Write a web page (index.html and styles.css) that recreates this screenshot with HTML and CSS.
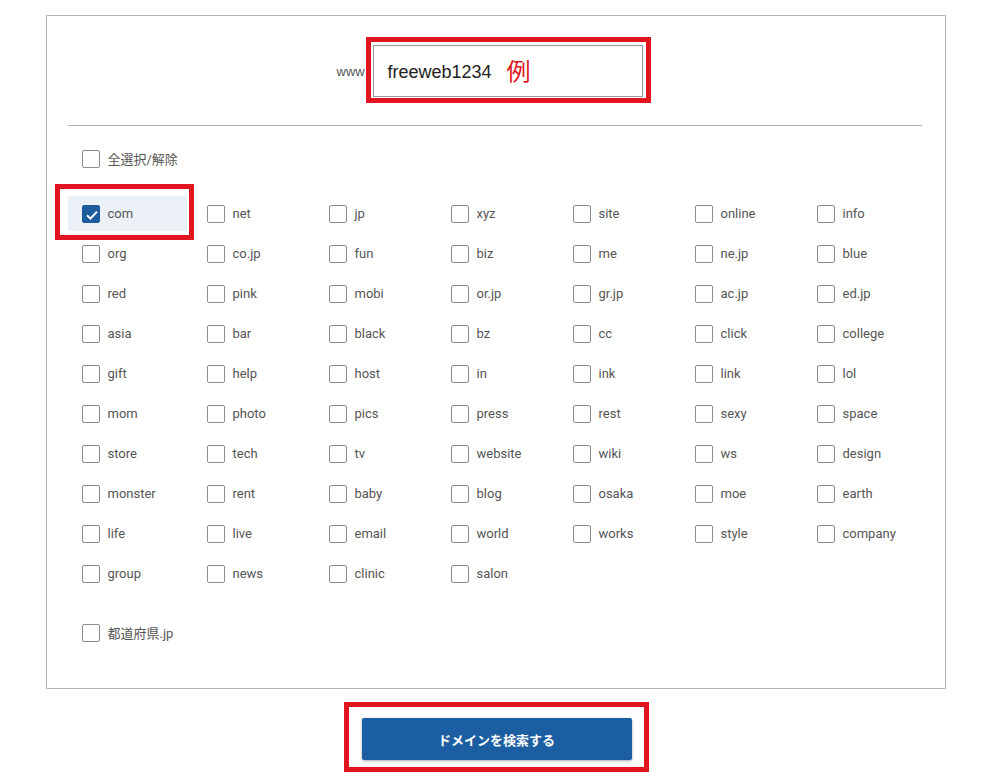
FILE: index.html
```html
<!DOCTYPE html>
<html lang="ja">
<head>
<meta charset="utf-8">
<title>ドメイン検索</title>
<link rel="stylesheet" href="styles.css">
</head>
<body>
<div class="card">
  <div class="domain-row">
    <span class="www">www</span>
    <div class="mark mark-input">
      <div class="input"><span class="val">freeweb1234</span><span class="rei">例</span></div>
    </div>
  </div>
  <hr class="divider">
  <div class="select-all">
    <label class="item"><span class="box"></span><span class="lbl">全選択/解除</span></label>
  </div>
  <div class="grid">
    <div class="mark mark-com"><label class="item checked"><span class="box"><svg viewBox="0 0 18 18" width="18" height="18"><path d="M4 9.3 L7.4 12.6 L14 5.6" fill="none" stroke="#fff" stroke-width="2"/></svg></span><span class="lbl">com</span></label></div>
    <label class="item"><span class="box"></span><span class="lbl">net</span></label>
    <label class="item"><span class="box"></span><span class="lbl">jp</span></label>
    <label class="item"><span class="box"></span><span class="lbl">xyz</span></label>
    <label class="item"><span class="box"></span><span class="lbl">site</span></label>
    <label class="item"><span class="box"></span><span class="lbl">online</span></label>
    <label class="item"><span class="box"></span><span class="lbl">info</span></label>

    <label class="item"><span class="box"></span><span class="lbl">org</span></label>
    <label class="item"><span class="box"></span><span class="lbl">co.jp</span></label>
    <label class="item"><span class="box"></span><span class="lbl">fun</span></label>
    <label class="item"><span class="box"></span><span class="lbl">biz</span></label>
    <label class="item"><span class="box"></span><span class="lbl">me</span></label>
    <label class="item"><span class="box"></span><span class="lbl">ne.jp</span></label>
    <label class="item"><span class="box"></span><span class="lbl">blue</span></label>

    <label class="item"><span class="box"></span><span class="lbl">red</span></label>
    <label class="item"><span class="box"></span><span class="lbl">pink</span></label>
    <label class="item"><span class="box"></span><span class="lbl">mobi</span></label>
    <label class="item"><span class="box"></span><span class="lbl">or.jp</span></label>
    <label class="item"><span class="box"></span><span class="lbl">gr.jp</span></label>
    <label class="item"><span class="box"></span><span class="lbl">ac.jp</span></label>
    <label class="item"><span class="box"></span><span class="lbl">ed.jp</span></label>

    <label class="item"><span class="box"></span><span class="lbl">asia</span></label>
    <label class="item"><span class="box"></span><span class="lbl">bar</span></label>
    <label class="item"><span class="box"></span><span class="lbl">black</span></label>
    <label class="item"><span class="box"></span><span class="lbl">bz</span></label>
    <label class="item"><span class="box"></span><span class="lbl">cc</span></label>
    <label class="item"><span class="box"></span><span class="lbl">click</span></label>
    <label class="item"><span class="box"></span><span class="lbl">college</span></label>

    <label class="item"><span class="box"></span><span class="lbl">gift</span></label>
    <label class="item"><span class="box"></span><span class="lbl">help</span></label>
    <label class="item"><span class="box"></span><span class="lbl">host</span></label>
    <label class="item"><span class="box"></span><span class="lbl">in</span></label>
    <label class="item"><span class="box"></span><span class="lbl">ink</span></label>
    <label class="item"><span class="box"></span><span class="lbl">link</span></label>
    <label class="item"><span class="box"></span><span class="lbl">lol</span></label>

    <label class="item"><span class="box"></span><span class="lbl">mom</span></label>
    <label class="item"><span class="box"></span><span class="lbl">photo</span></label>
    <label class="item"><span class="box"></span><span class="lbl">pics</span></label>
    <label class="item"><span class="box"></span><span class="lbl">press</span></label>
    <label class="item"><span class="box"></span><span class="lbl">rest</span></label>
    <label class="item"><span class="box"></span><span class="lbl">sexy</span></label>
    <label class="item"><span class="box"></span><span class="lbl">space</span></label>

    <label class="item"><span class="box"></span><span class="lbl">store</span></label>
    <label class="item"><span class="box"></span><span class="lbl">tech</span></label>
    <label class="item"><span class="box"></span><span class="lbl">tv</span></label>
    <label class="item"><span class="box"></span><span class="lbl">website</span></label>
    <label class="item"><span class="box"></span><span class="lbl">wiki</span></label>
    <label class="item"><span class="box"></span><span class="lbl">ws</span></label>
    <label class="item"><span class="box"></span><span class="lbl">design</span></label>

    <label class="item"><span class="box"></span><span class="lbl">monster</span></label>
    <label class="item"><span class="box"></span><span class="lbl">rent</span></label>
    <label class="item"><span class="box"></span><span class="lbl">baby</span></label>
    <label class="item"><span class="box"></span><span class="lbl">blog</span></label>
    <label class="item"><span class="box"></span><span class="lbl">osaka</span></label>
    <label class="item"><span class="box"></span><span class="lbl">moe</span></label>
    <label class="item"><span class="box"></span><span class="lbl">earth</span></label>

    <label class="item"><span class="box"></span><span class="lbl">life</span></label>
    <label class="item"><span class="box"></span><span class="lbl">live</span></label>
    <label class="item"><span class="box"></span><span class="lbl">email</span></label>
    <label class="item"><span class="box"></span><span class="lbl">world</span></label>
    <label class="item"><span class="box"></span><span class="lbl">works</span></label>
    <label class="item"><span class="box"></span><span class="lbl">style</span></label>
    <label class="item"><span class="box"></span><span class="lbl">company</span></label>

    <label class="item"><span class="box"></span><span class="lbl">group</span></label>
    <label class="item"><span class="box"></span><span class="lbl">news</span></label>
    <label class="item"><span class="box"></span><span class="lbl">clinic</span></label>
    <label class="item"><span class="box"></span><span class="lbl">salon</span></label>
  </div>
  <div class="pref">
    <label class="item"><span class="box"></span><span class="lbl">都道府県.jp</span></label>
  </div>
</div>
<div class="btn-row">
  <div class="mark mark-btn">
    <button class="search-btn" type="button">ドメインを検索する</button>
  </div>
</div>
</body>
</html>
```

FILE: styles.css
```css
* { box-sizing: border-box; }
html, body { margin: 0; padding: 0; background: #fff; }
body {
  font-family: Roboto, "Noto Sans CJK JP", sans-serif;
  color: #555;
  padding-top: 15px;
}
.card {
  width: 900px;
  margin: 0 auto;
  border: 1px solid #b4b4b4;
  padding: 21px 23px 38px 21px;
}
.domain-row {
  display: flex;
  align-items: center;
  padding-left: 269px;
}
.www {
  font-family: "Liberation Sans", Arial, sans-serif;
  font-size: 13px;
  color: #555;
  width: 29px;
  white-space: nowrap;
  margin-top: 2px;
}
.mark { border: 5px solid #e1141f; }
.mark-input { padding: 3px 3px 1px 2px; }
.input {
  width: 270px;
  height: 52px;
  border: 1px solid #9a9a9a;
  display: flex;
  align-items: center;
  padding-left: 14px;
  padding-top: 2px;
  box-shadow: inset 0 1px 1px rgba(0,0,0,0.06);
}
.val {
  font-family: "Liberation Sans", Arial, sans-serif;
  font-size: 18px;
  color: #222;
}
.rei {
  font-family: "Noto Sans CJK JP", sans-serif;
  font-size: 24px;
  color: #e1141f;
  margin-left: 15px;
  line-height: 1;
  margin-top: -4px;
}
.divider {
  border: 0;
  border-top: 1px solid #b4b4b4;
  margin: 22px 0 15px;
  height: 0;
}
.item {
  display: flex;
  align-items: center;
  height: 35px;
  padding-left: 14px;
  font-size: 13px;
  color: #555;
}
.box {
  width: 18px;
  height: 18px;
  border: 1px solid #8c8c8c;
  border-radius: 2px;
  flex: none;
  display: block;
  background: #fff;
}
.box svg { display: block; }
.lbl { margin-left: 8px; white-space: nowrap; }
.select-all { margin-bottom: 20px; }
.grid {
  display: grid;
  grid-template-columns: 125px repeat(6, 122px);
  grid-auto-rows: 35px;
  row-gap: 5px;
  position: relative;
}
.mark-com {
  margin: -12px -7px -9px -13px;
  padding: 7px 2px 4px 8px;
  width: 139px;
  height: 56px;
  position: relative;
  z-index: 1;
}
.mark-com .item {
  background: #ecf1f7;
  width: 119px;
  padding-left: 14px;
}
.item.checked .box {
  background: #1d5c9c;
  border-color: #1d5c9c;
}
.pref { margin-top: 24px; }
.btn-row {
  display: flex;
  justify-content: center;
  margin-top: 13px;
}
.mark-btn { padding: 11px 12px 7px 13px; margin-left: 1px; }
.search-btn {
  width: 270px;
  height: 42px;
  background: #1b5ea1;
  border: 0;
  border-radius: 2px;
  color: #fff;
  font-family: "Noto Sans CJK JP", sans-serif;
  font-weight: 700;
  font-size: 13px;
  box-shadow: 0 1px 3px rgba(0,0,0,0.35);
  display: block;
}
```
